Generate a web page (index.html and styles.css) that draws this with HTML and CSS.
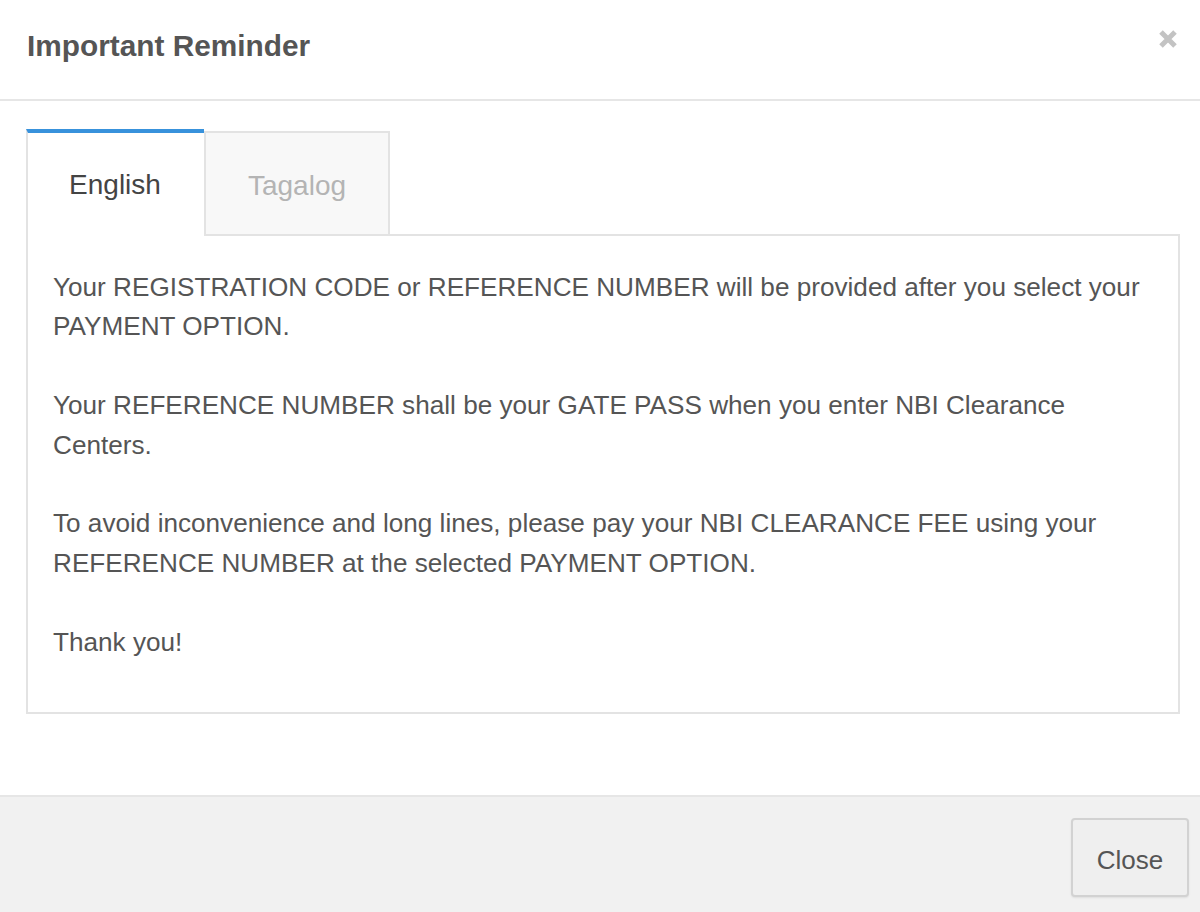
FILE: index.html
```html
<!DOCTYPE html>
<html lang="en">
<head>
<meta charset="utf-8">
<title>Important Reminder</title>
<link rel="stylesheet" href="styles.css">
</head>
<body>
<div class="modal">
  <header class="modal-header">
    <h4 class="modal-title">Important Reminder</h4>
    <button class="close-x" aria-label="Close">
      <svg width="20" height="20" viewBox="0 0 20 20"><path d="M3 3 L17 17 M17 3 L3 17" stroke="#c3c3c3" stroke-width="5" stroke-linecap="butt" fill="none"/></svg>
    </button>
  </header>
  <main class="modal-body">
    <nav class="tabs">
      <div class="tab active">English</div>
      <div class="tab">Tagalog</div>
    </nav>
    <section class="panel">
      <p>Your REGISTRATION CODE or REFERENCE NUMBER will be provided after you select your PAYMENT OPTION.</p>
      <p>Your REFERENCE NUMBER shall be your GATE PASS when you enter NBI Clearance Centers.</p>
      <p>To avoid inconvenience and long lines, please pay your NBI CLEARANCE FEE using your REFERENCE NUMBER at the selected PAYMENT OPTION.</p>
      <p>Thank you!</p>
    </section>
  </main>
  <footer class="modal-footer">
    <button class="btn">Close</button>
  </footer>
</div>
</body>
</html>
```
FILE: styles.css
```css
* { box-sizing: border-box; }
html, body { margin: 0; padding: 0; background: #fff; }
body { font-family: "Liberation Sans", Arial, sans-serif; color: #555; }

.modal {
  width: 1200px;
  height: 912px;
  display: flex;
  flex-direction: column;
  overflow: hidden;
}

.modal-header {
  display: flex;
  justify-content: space-between;
  align-items: flex-start;
  padding: 28px 22px 0 27px;
  height: 101px;
  border-bottom: 2px solid #e6e6e6;
}
.modal-title {
  margin: 0;
  font-size: 29.8px;
  line-height: 36px;
  font-weight: bold;
  color: #555;
}
.close-x {
  border: 0;
  background: none;
  padding: 0;
  margin-top: 1px;
  width: 20px;
  height: 20px;
  display: block;
}
.close-x svg { display: block; }

.modal-body {
  flex: 1;
  padding: 28px 20px 0 26px;
}

.tabs {
  display: flex;
  align-items: flex-end;
  position: relative;
  z-index: 1;
}
.tab {
  display: flex;
  align-items: center;
  justify-content: center;
  font-size: 28px;
}
.tab.active {
  width: 178px;
  height: 107px;
  margin-bottom: -2px;
  border-top: 4px solid #3892dc;
  border-left: 2px solid #e3e3e3;
  background: #fff;
  color: #444;
  padding: 0 2px 0 0;
}
.tab:not(.active) {
  width: 186px;
  height: 103px;
  border: 2px solid #e3e3e3;
  border-bottom: 0;
  background: #f8f8f8;
  color: #b4b4b4;
  padding-top: 4px;
}

.panel {
  border: 2px solid #e3e3e3;
  padding: 32px 24px 50px 25px;
  font-size: 26.15px;
  line-height: 39.4px;
  color: #555;
}
.panel p { margin: 0 0 39.4px; }
.panel p:last-child { margin-bottom: 0; }

.modal-footer {
  height: 117px;
  flex: none;
  background: #f1f1f1;
  border-top: 2px solid #e6e6e6;
  display: flex;
  justify-content: flex-end;
  align-items: flex-start;
  padding: 21px 11px 0 0;
}
.btn {
  width: 118px;
  height: 79px;
  font-family: "Liberation Sans", Arial, sans-serif;
  font-size: 26px;
  color: #555;
  background: #efefef;
  border: 2px solid #d2d2d2;
  border-radius: 4px;
  box-shadow: 0 1px 2px rgba(0,0,0,0.08);
  padding: 5px 0 0;
}
```
